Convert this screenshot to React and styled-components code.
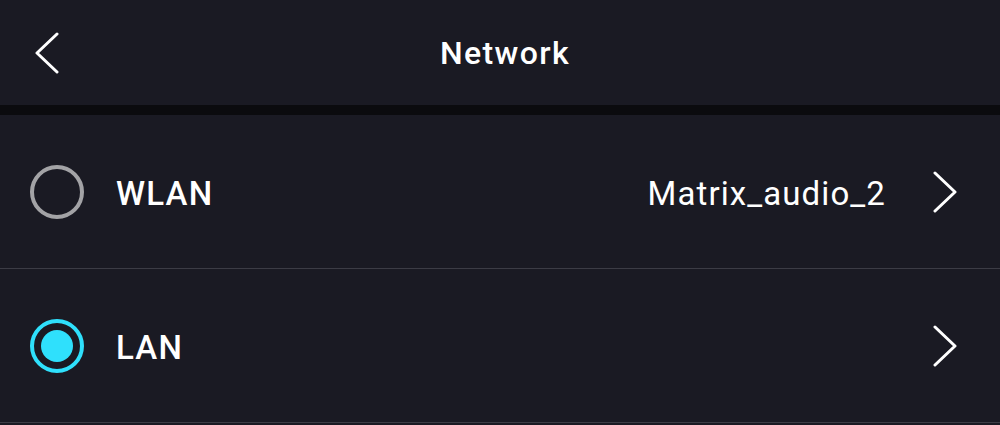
import React, { useState } from "react";
import styled, { createGlobalStyle } from "styled-components";

const GlobalStyle = createGlobalStyle`
  html, body {
    margin: 0;
    padding: 0;
    background: #1a1a23;
  }
  body {
    font-family: Roboto, "Noto Sans", sans-serif;
    color: #ffffff;
  }
`;

const Screen = styled.div`
  width: 1000px;
  height: 425px;
  display: flex;
  flex-direction: column;
  background: #1a1a23;
  overflow: hidden;
`;

const Header = styled.header`
  height: 105px;
  display: grid;
  grid-template-columns: 120px 1fr 110px;
  align-items: center;
  border-bottom: 10px solid #0b0b0e;
`;

const BackButton = styled.button`
  width: 60px;
  height: 60px;
  margin-left: 18px;
  padding: 0;
  border: 0;
  background: none;
  display: flex;
  align-items: center;
  justify-content: center;
  cursor: pointer;
`;

const Title = styled.h1`
  margin: 0;
  text-align: center;
  font-size: 32px;
  font-weight: 500;
  letter-spacing: 1.4px;
`;

const List = styled.ul`
  margin: 0;
  padding: 0;
  list-style: none;
`;

const Row = styled.li`
  height: 153px;
  display: flex;
  align-items: center;
  padding: 0 42px 0 30px;
  border-bottom: 1px solid #3c3c45;
  cursor: pointer;
`;

const Radio = styled.span`
  width: 54px;
  height: 54px;
  box-sizing: border-box;
  border-radius: 50%;
  border: 4px solid ${(p) => (p.checked ? "#2fe0fc" : "#a3a3a6")};
  display: flex;
  align-items: center;
  justify-content: center;
  flex-shrink: 0;

  &::after {
    content: "";
    display: ${(p) => (p.checked ? "block" : "none")};
    width: 32px;
    height: 32px;
    border-radius: 50%;
    background: #2fe0fc;
  }
`;

const Label = styled.span`
  margin-left: 32px;
  padding-top: 3px;
  font-size: 33px;
  font-weight: 500;
  letter-spacing: 1.2px;
  flex: 1;
`;

const Value = styled.span`
  padding-top: 3px;
  font-size: 33px;
  font-weight: 400;
  letter-spacing: 1.1px;
  margin-right: 46px;
`;

const Chevron = ({ dir = "right" }) => (
  <svg width="26" height="42" viewBox="0 0 26 42" fill="none">
    <path
      d={dir === "right" ? "M3 2 L23 21 L3 40" : "M22 2 L2 21 L22 40"}
      stroke="#ffffff"
      strokeWidth="3"
      strokeLinecap="round"
      strokeLinejoin="round"
    />
  </svg>
);

const networks = [
  { id: "wlan", label: "WLAN", value: "Matrix_audio_2" },
  { id: "lan", label: "LAN", value: "" },
];

export default function App() {
  const [selected, setSelected] = useState("lan");

  return (
    <>
      <GlobalStyle />
      <Screen>
        <Header>
          <BackButton aria-label="Back">
            <Chevron dir="left" />
          </BackButton>
          <Title>Network</Title>
          <span />
        </Header>
        <List>
          {networks.map((n) => (
            <Row key={n.id} onClick={() => setSelected(n.id)}>
              <Radio checked={selected === n.id} />
              <Label>{n.label}</Label>
              {n.value && <Value>{n.value}</Value>}
              <Chevron />
            </Row>
          ))}
        </List>
      </Screen>
    </>
  );
}
